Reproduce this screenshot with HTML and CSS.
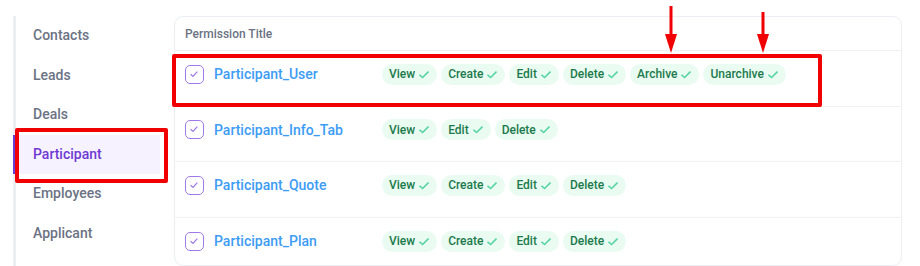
FILE: index.html
```html
<!DOCTYPE html>
<html lang="en">

<head>
    <meta charset="UTF-8" />
    <meta name="viewport" content="width=device-width, initial-scale=1.0" />
    <title>Permissions</title>
    <link rel="stylesheet" href="styles.css">
</head>

<body>
    <div class="page">
        <ul class="side-nav">
            <li>Contacts</li>
            <li>Leads</li>
            <li>Deals</li>
            <li class="active">Participant</li>
            <li>Employees</li>
            <li>Applicant</li>
        </ul>

        <div class="perm-card">
            <div class="perm-head">Permission Title</div>

            <div class="perm-row marked">
                <div class="perm-title"><span class="check-box"></span>Participant_User</div>
                <div class="pills">
                    <span class="pill">View</span>
                    <span class="pill">Create</span>
                    <span class="pill">Edit</span>
                    <span class="pill">Delete</span>
                    <span class="pill">Archive</span>
                    <span class="pill">Unarchive</span>
                </div>
            </div>

            <div class="perm-row">
                <div class="perm-title"><span class="check-box"></span>Participant_Info_Tab</div>
                <div class="pills">
                    <span class="pill">View</span>
                    <span class="pill">Edit</span>
                    <span class="pill">Delete</span>
                </div>
            </div>

            <div class="perm-row">
                <div class="perm-title"><span class="check-box"></span>Participant_Quote</div>
                <div class="pills">
                    <span class="pill">View</span>
                    <span class="pill">Create</span>
                    <span class="pill">Edit</span>
                    <span class="pill">Delete</span>
                </div>
            </div>

            <div class="perm-row">
                <div class="perm-title"><span class="check-box"></span>Participant_Plan</div>
                <div class="pills">
                    <span class="pill">View</span>
                    <span class="pill">Create</span>
                    <span class="pill">Edit</span>
                    <span class="pill">Delete</span>
                </div>
            </div>
        </div>

        <!-- annotation arrows -->
        <svg class="arrow arrow-one" width="14" height="48" viewBox="0 0 14 48">
            <path d="M7 0 V30" stroke="#f00000" stroke-width="3" />
            <path d="M1 28 H13 L7 47 Z" fill="#f00000" />
        </svg>
        <svg class="arrow arrow-two" width="14" height="42" viewBox="0 0 14 42">
            <path d="M7 0 V24" stroke="#f00000" stroke-width="3" />
            <path d="M1 22 H13 L7 41 Z" fill="#f00000" />
        </svg>
    </div>
</body>

</html>
```

FILE: styles.css
```css
* {
    box-sizing: border-box;
    margin: 0;
    padding: 0;
}

body {
    font-family: 'Roboto', 'Liberation Sans', sans-serif;
    background: #fff;
    width: 920px;
    height: 266px;
    overflow: hidden;
}

.page {
    position: relative;
    display: flex;
    gap: 14px;
    padding: 16px 0 0 13px;
}

.side-nav {
    list-style: none;
    width: 147px;
    border-left: 3px solid #eceef2;
    height: 250px;
}

.side-nav li {
    position: relative;
    height: 39.5px;
    line-height: 39.5px;
    padding-left: 17px;
    font-size: 14px;
    font-weight: 500;
    color: #6b7384;
}

.side-nav li.active {
    color: #7039d4;
    background: #f6f2ff;
    margin-left: -3px;
    border-left: 3px solid #6b3fd6;
}

.side-nav li.active::after {
    content: '';
    position: absolute;
    left: -1px;
    top: -7px;
    width: 145px;
    height: 47px;
    border: 4px solid #f00000;
    border-radius: 2px;
}

.perm-card {
    width: 728px;
    border: 1px solid #eceef3;
    border-radius: 9px;
    height: 250px;
    overflow: visible;
}

.perm-head {
    height: 34px;
    padding: 10px 0 0 10px;
    font-size: 12px;
    font-weight: 500;
    color: #6b7384;
    border-bottom: 1px solid #eef0f5;
}

.perm-row {
    position: relative;
    display: flex;
    align-items: center;
    height: 55.5px;
    padding: 0 10px 8px;
    border-bottom: 1px solid #f0f0f6;
}

.perm-row:last-child {
    border-bottom: none;
}

.perm-row.marked::after {
    content: '';
    position: absolute;
    left: -3px;
    top: 3px;
    width: 642px;
    height: 45px;
    border: 4px solid #f00000;
    border-radius: 2px;
}

.perm-title {
    display: flex;
    align-items: center;
    width: 197px;
    font-size: 14px;
    font-weight: 500;
    color: #3d9cf4;
}

.check-box {
    width: 19px;
    height: 19px;
    margin-right: 10px;
    border: 1.5px solid #9d7ae6;
    border-radius: 5px;
    background: url("data:image/svg+xml,%3Csvg xmlns='http://www.w3.org/2000/svg' width='19' height='19'%3E%3Cpath d='M6 9.5 L8.3 11.6 L12.5 7' fill='none' stroke='%239d7ae6' stroke-width='1.2'/%3E%3C/svg%3E") no-repeat -1.5px -1.5px;
}

.pills {
    display: flex;
    gap: 4px;
}

.pill {
    display: inline-flex;
    align-items: center;
    height: 21px;
    padding: 0 8px 0 7px;
    border-radius: 11px;
    background: #eafbf2;
    color: #1c7a4c;
    font-size: 12px;
    font-weight: 500;
}

.pill::after {
    content: '';
    width: 10px;
    height: 9px;
    margin-left: 4px;
    background: url("data:image/svg+xml,%3Csvg xmlns='http://www.w3.org/2000/svg' width='10' height='9'%3E%3Cpath d='M0.5 4.8 L3.6 7.5 L9.5 1.5' fill='none' stroke='%2357d3a6' stroke-width='1.6'/%3E%3C/svg%3E") no-repeat;
}

.arrow {
    position: absolute;
}

.arrow-one {
    left: 664px;
    top: 6px;
}

.arrow-two {
    left: 756px;
    top: 12px;
}
```
